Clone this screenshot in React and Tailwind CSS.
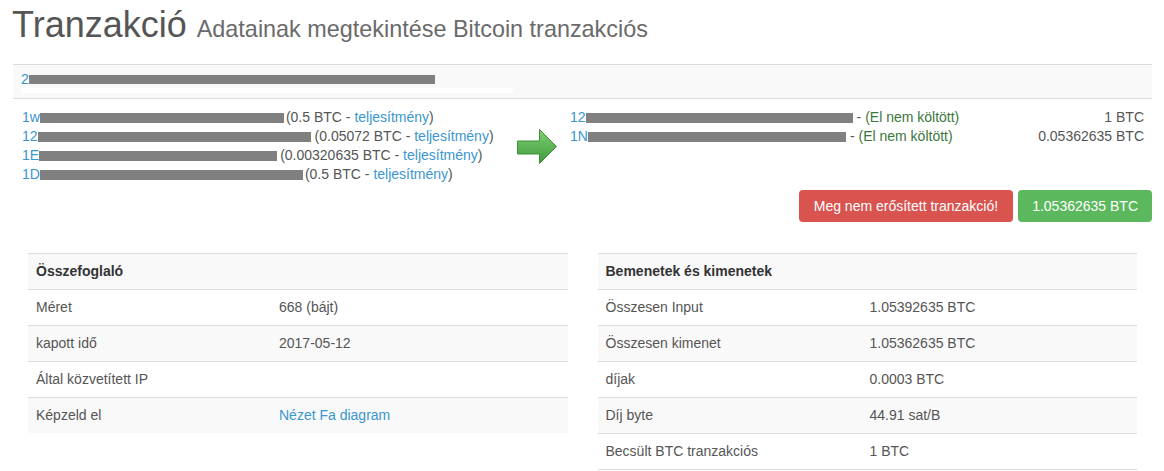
export default function App() {
  const inputs = [
    { pre: '1w', bar: 244, gap: 'ml-[2px]', amount: '0.5 BTC' },
    { pre: '12', bar: 273, gap: 'ml-[4px]', amount: '0.05072 BTC' },
    { pre: '1E', bar: 238, gap: 'ml-[3px]', amount: '0.00320635 BTC' },
    { pre: '1D', bar: 263, gap: 'ml-[2px]', amount: '0.5 BTC' },
  ]
  const outputs = [
    { pre: '12', bar: 267, amount: '1 BTC' },
    { pre: '1N', bar: 258, amount: '0.05362635 BTC' },
  ]
  const summary = [
    ['Összefoglaló', ''],
    ['Méret', '668 (bájt)'],
    ['kapott idő', '2017-05-12'],
    ['Által közvetített IP', ''],
    ['Képzeld el', 'Nézet Fa diagram'],
  ]
  const io = [
    ['Bemenetek és kimenetek', ''],
    ['Összesen Input', '1.05392635 BTC'],
    ['Összesen kimenet', '1.05362635 BTC'],
    ['díjak', '0.0003 BTC'],
    ['Díj byte', '44.91 sat/B'],
    ['Becsült BTC tranzakciós', '1 BTC'],
  ]

  return (
    <div className="w-[1164px] h-[471px] overflow-hidden bg-white font-['Liberation_Sans',Arial,sans-serif] text-[14px] text-[#555]">
      <div className="pl-[13px] pr-[12px]">
        {/* Page title */}
        <h1 className="mt-[5px] ml-[-1px] leading-[40px] text-[36px] text-[#555] whitespace-nowrap">
          Tranzakció{' '}
          <span className="text-[23.4px] text-[#6a6a6a]">Adatainak megtekintése Bitcoin tranzakciós</span>
        </h1>

        {/* Hash row */}
        <div className="mt-[15px] h-[35px] border-y border-[#ddd] bg-[#f9f9f9] px-[8px] pt-[8px]">
          <div className="flex items-center h-[12px] leading-[12px]">
            <span className="text-[#3a96d0]">2</span>
            <span className="inline-block w-[406px] h-[9px] bg-[#808080]" />
          </div>
          <div className="mt-[3px] w-[492px] h-[5px] bg-white" />
        </div>

        {/* Inputs -> outputs */}
        <div className="flex items-start pt-[9px] pb-[6px]">
          <div className="w-[496px] pl-[9px] leading-[19px] whitespace-nowrap">
            {inputs.map((r, i) => (
              <div key={i} className="flex items-center">
                <span className="text-[#3a96d0]">{r.pre}</span>
                <span className="inline-block h-[10px] bg-[#808080]" style={{ width: r.bar }} />
                <span className={r.gap}>
                  ({r.amount} - <span className="text-[#3a96d0]">teljesítmény</span>)
                </span>
              </div>
            ))}
          </div>
          <div className="w-[61px] flex pl-[8px] mt-[21px]">
            <svg width="40" height="35" viewBox="0 0 40 35">
              <defs>
                <linearGradient id="ag" x1="0" y1="0" x2="0" y2="1">
                  <stop offset="0" stopColor="#7fcf73" />
                  <stop offset="1" stopColor="#3f9a3d" />
                </linearGradient>
              </defs>
              <polygon
                points="0.5,12 22.5,12 22.5,0.5 39.5,17.5 22.5,34.5 22.5,25 0.5,25"
                fill="url(#ag)"
                stroke="#3d8f3a"
                strokeWidth="1"
              />
            </svg>
          </div>
          <div className="flex-1 pr-[8px] leading-[19px] whitespace-nowrap">
            {outputs.map((r, i) => (
              <div key={i} className="flex items-center">
                <span className="text-[#3a96d0]">{r.pre}</span>
                <span className="inline-block h-[10px] bg-[#808080]" style={{ width: r.bar }} />
                <span className="ml-[4px]">
                  - <span className="text-[#3c763d]">(El nem költött)</span>
                </span>
                <span className="ml-auto">{r.amount}</span>
              </div>
            ))}
          </div>
        </div>

        {/* Status buttons */}
        <div className="flex justify-end gap-[5px]">
          <span className="h-[32px] px-[15px] flex items-center rounded-[4px] bg-[#d9534f] text-white">
            Meg nem erősített tranzakció!
          </span>
          <span className="h-[32px] px-[14px] flex items-center rounded-[4px] bg-[#5cb85c] text-white">
            1.05362635 BTC
          </span>
        </div>
      </div>

      {/* Detail tables */}
      <div className="mt-[31px] pl-[13px] pr-[12px] grid grid-cols-2">
        <div className="px-[15px]">
          {summary.map(([k, v], i) => (
            <div
              key={i}
              className={`flex h-[36px] items-center border-t border-[#ddd] ${i % 2 === 0 ? 'bg-[#f9f9f9]' : 'bg-white'}`}
            >
              <div className={`w-[243px] px-[8px] ${i === 0 ? 'font-bold text-[#333]' : ''}`}>{k}</div>
              <div className={`px-[8px] ${i === 4 ? 'text-[#3a96d0]' : ''}`}>{v}</div>
            </div>
          ))}
        </div>
        <div className="px-[15px]">
          {io.map(([k, v], i) => (
            <div
              key={i}
              className={`flex h-[36px] items-center border-t border-[#ddd] ${i % 2 === 0 ? 'bg-[#f9f9f9]' : 'bg-white'}`}
            >
              <div className={`w-[264px] px-[8px] ${i === 0 ? 'font-bold text-[#333]' : ''}`}>{k}</div>
              <div className="px-[8px]">{v}</div>
            </div>
          ))}
          <div className="border-t border-[#ddd]" />
        </div>
      </div>
    </div>
  )
}
